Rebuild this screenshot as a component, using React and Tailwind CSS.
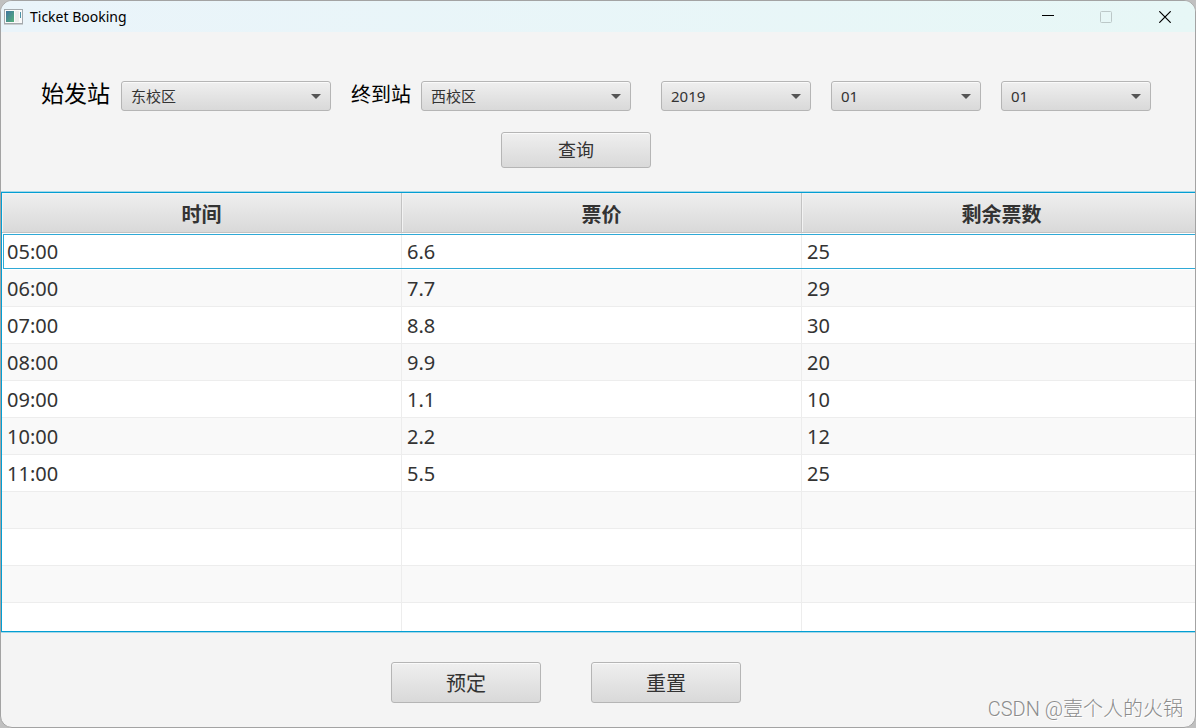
import React, { useState } from 'react';

const stations = ['东校区', '西校区'];
const years = ['2019', '2020', '2021'];
const months = Array.from({ length: 12 }, (_, i) => String(i + 1).padStart(2, '0'));
const days = Array.from({ length: 31 }, (_, i) => String(i + 1).padStart(2, '0'));

const tickets = [
    { time: '05:00', price: '6.6', left: 25 },
    { time: '06:00', price: '7.7', left: 29 },
    { time: '07:00', price: '8.8', left: 30 },
    { time: '08:00', price: '9.9', left: 20 },
    { time: '09:00', price: '1.1', left: 10 },
    { time: '10:00', price: '2.2', left: 12 },
    { time: '11:00', price: '5.5', left: 25 },
];

const EMPTY_ROWS = 4;

const App = () => {
    const [form, setForm] = useState({ from: '东校区', to: '西校区', year: '2019', month: '01', day: '01' });
    const [selected, setSelected] = useState(0);

    const update = (key) => (e) => setForm({ ...form, [key]: e.target.value });

    const rows = [...tickets, ...Array(EMPTY_ROWS).fill(null)];

    return (
        <div className="h-screen bg-[#c0c0c0] font-['Noto_Sans','Noto_Sans_CJK_SC',sans-serif] text-[#333333]">
            <div className="relative flex h-full flex-col overflow-hidden rounded-xl border border-[#a3a3a3] bg-[#f4f4f4]">
                <TitleBar />

                <form className="h-40 shrink-0 pt-[49px]" onSubmit={(e) => e.preventDefault()}>
                    <div className="flex items-center pl-10">
                        <label htmlFor="from" className="mr-[10px] w-[70px] whitespace-nowrap pb-1.5 text-[23px] leading-6 text-black">始发站</label>
                        <ComboBox id="from" className="w-[210px]" value={form.from} options={stations} onChange={update('from')} />
                        <label htmlFor="to" className="ml-5 mr-[10px] w-[60px] whitespace-nowrap pb-0.5 text-[20px] leading-6 text-black">终到站</label>
                        <ComboBox id="to" className="w-[210px]" value={form.to} options={stations} onChange={update('to')} />
                        <div className="ml-[30px] flex gap-5">
                            <ComboBox id="year" label="Year" className="w-[150px]" value={form.year} options={years} onChange={update('year')} />
                            <ComboBox id="month" label="Month" className="w-[150px]" value={form.month} options={months} onChange={update('month')} />
                            <ComboBox id="day" label="Day" className="w-[150px]" value={form.day} options={days} onChange={update('day')} />
                        </div>
                    </div>
                    <div className="mt-[21px] flex justify-center pr-11">
                        <Button type="submit" className="h-9 text-[18px]">查询</Button>
                    </div>
                </form>

                <div className="min-h-0 flex-1 overflow-hidden border-y border-l border-[#039ed3] bg-white shadow-[0_-1px_0_#a5d8e8,0_1px_0_#a5d8e8]">
                    <table className="w-full min-w-[1200px] table-fixed border-separate border-spacing-0 text-[20px]">
                        <thead>
                            <tr>
                                <HeadCell>时间</HeadCell>
                                <HeadCell>票价</HeadCell>
                                <HeadCell>剩余票数</HeadCell>
                            </tr>
                        </thead>
                        <tbody>
                            {rows.map((row, i) => (
                                <tr
                                    key={i}
                                    onClick={() => row && setSelected(i)}
                                    className={`h-[37px] odd:bg-white even:bg-[#f9f9f9] ${i === selected ? 'outline-1 -outline-offset-2 outline-[#2fa9d6]' : ''}`}
                                >
                                    <Cell focused={i === selected}>{row?.time}</Cell>
                                    <Cell focused={i === selected}>{row?.price}</Cell>
                                    <Cell focused={i === selected}>{row?.left}</Cell>
                                </tr>
                            ))}
                        </tbody>
                    </table>
                </div>

                <div className="flex h-[95px] shrink-0 justify-center gap-[50px] pr-16 pt-[30px]">
                    <Button className="h-[41px] pt-0.5 text-[20px]">预定</Button>
                    <Button className="h-[41px] pt-0.5 text-[20px]">重置</Button>
                </div>

                <span className="absolute bottom-1 right-3 font-[Roboto,'Noto_Sans_CJK_SC',sans-serif] text-[20px] font-light leading-7 text-[#8c8c8c] [text-shadow:1px_1px_0_#ffffff]">
                    CSDN @壹个人的火锅
                </span>
            </div>
        </div>
    );
};

const TitleBar = () => (
    <header className="flex h-[31px] shrink-0 items-center bg-linear-to-r from-[#eaf4fa] to-[#e7f7f6] pl-[3px] text-black">
        <svg width="19" height="16" viewBox="0 0 19 16" aria-hidden="true">
            <defs>
                <linearGradient id="pane" x1="0" y1="0" x2="1" y2="1">
                    <stop offset="0" stopColor="#3f74a0" />
                    <stop offset="1" stopColor="#55b07a" />
                </linearGradient>
            </defs>
            <rect x="0.5" y="0.5" width="18" height="14" fill="#fafafa" stroke="#a4a9ad" />
            <rect x="2" y="2" width="8" height="11" fill="url(#pane)" />
            <rect x="11" y="2" width="4" height="11" fill="#ececec" />
            <rect x="16" y="3" width="1" height="6" fill="#4b93a8" />
            <path d="M0 15.5H19" stroke="#c9ced1" />
        </svg>
        <h1 className="ml-[7px] flex-1 text-[14px]">Ticket Booking</h1>
        <button type="button" aria-label="Minimize" className="flex h-full w-[58px] items-center justify-center">
            <svg width="12" height="12" viewBox="0 0 12 12" stroke="currentColor" shapeRendering="crispEdges">
                <path d="M0 4.5H12" />
            </svg>
        </button>
        <button type="button" aria-label="Maximize" disabled className="flex h-full w-[58px] items-center justify-center text-[#bcc8c8]">
            <svg width="12" height="12" viewBox="0 0 12 12" fill="none" stroke="currentColor">
                <rect x="0.5" y="0.5" width="11" height="11" rx="1" />
            </svg>
        </button>
        <button type="button" aria-label="Close" className="flex h-full w-[60px] items-center justify-center">
            <svg width="12" height="12" viewBox="0 0 12 12" stroke="currentColor" strokeWidth="1.2">
                <path d="M0.3 0.3L11.7 11.7M11.7 0.3L0.3 11.7" />
            </svg>
        </button>
    </header>
);

const ComboBox = ({ id, label, value, options, onChange, className }) => (
    <div className={`relative h-[30px] ${className}`}>
        <select
            id={id}
            aria-label={label}
            value={value}
            onChange={onChange}
            className="h-full w-full appearance-none rounded-[3px] border border-[#b5b5b5] bg-linear-to-b from-[#efefef] to-[#d9d9d9] pl-[9px] pr-8 text-[15px] shadow-[inset_0_1px_0_#fafafa]"
        >
            {options.map((option) => (
                <option key={option}>{option}</option>
            ))}
        </select>
        <svg className="pointer-events-none absolute right-[10px] top-[13px]" width="10" height="5" viewBox="0 0 10 5" fill="#555555">
            <path d="M0 0H10L5 5Z" />
        </svg>
    </div>
);

const Button = ({ type = 'button', className, children }) => (
    <button
        type={type}
        className={`w-[150px] rounded-[3px] border border-[#b5b5b5] bg-linear-to-b from-[#efefef] to-[#d9d9d9] shadow-[inset_0_1px_0_#fafafa] ${className}`}
    >
        {children}
    </button>
);

const HeadCell = ({ children }) => (
    <th className="h-10 border-b border-r border-[#c3c3c3] bg-linear-to-b from-[#efefef] to-[#d9d9d9] px-0 pb-0 pt-1 font-bold leading-8 shadow-[inset_1px_1px_0_#f3f3f3]">
        {children}
    </th>
);

const Cell = ({ focused, children }) => (
    <td className={`h-[37px] border-b border-r border-r-[#ededed] px-[5px] pb-0 pt-0.5 leading-8 ${focused ? 'border-b-transparent' : 'border-b-[#ededed]'}`}>
        {children}
    </td>
);

export default App;
